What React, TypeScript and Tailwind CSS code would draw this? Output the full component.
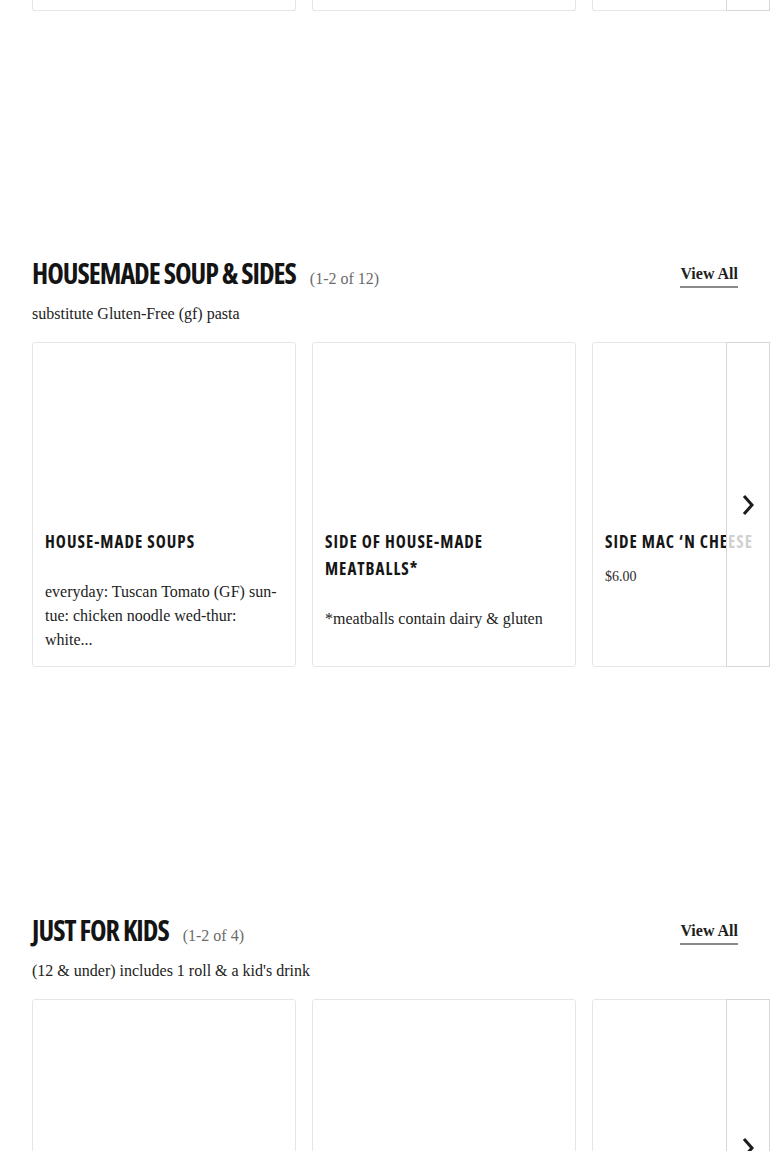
import React from "react";

type Item = { name: string; desc?: string; price?: string };

const soupsAndSides: Item[] = [
  {
    name: "House-made Soups",
    desc: "everyday: Tuscan Tomato (GF) sun-tue: chicken noodle wed-thur: white...",
  },
  { name: "Side of House-made Meatballs*", desc: "*meatballs contain dairy & gluten" },
  { name: "Side Mac \u2018n Cheese", price: "$6.00" },
];

const NextArrow: React.FC<{ clipped?: boolean }> = ({ clipped }) => (
  <div
    className={
      clipped
        ? "absolute right-0 top-0 bottom-0 w-[44px] border border-t-0 border-[#d6d6d6] bg-white/80"
        : "absolute right-0 top-0 bottom-0 w-[44px] border border-[#d6d6d6] bg-white/80 flex items-center justify-center"
    }
  >
    {!clipped && (
      <svg width="12" height="22" viewBox="0 0 12 22" fill="none">
        <path d="M2 2 L10 11 L2 20" stroke="#1c1c1c" strokeWidth="3" />
      </svg>
    )}
  </div>
);

const Card: React.FC<{ item: Item }> = ({ item }) => (
  <div className="w-[264px] shrink-0 border border-[#e6e6e6] rounded-[3px] bg-white flex flex-col">
    <div className="h-[172px]" />
    <div className="px-[12px] pt-[13px] pb-[14px]">
      <h3 className="font-['Open_Sans'] font-stretch-condensed font-bold uppercase text-[17px] leading-[27px] tracking-[1px] text-[#161616]">
        {item.name}
      </h3>
      {item.price && <p className="mt-[12px] text-[14px] leading-[20px] text-[#2a2a2a]">{item.price}</p>}
      {item.desc && <p className="mt-[25px] text-[16px] leading-[24px] text-[#222]">{item.desc}</p>}
    </div>
  </div>
);

const SectionHeader: React.FC<{ title: string; count: string; note: string }> = ({ title, count, note }) => (
  <div className="px-8">
    <div className="flex items-start justify-between">
      <div className="flex items-baseline">
        <h2 className="font-['Open_Sans'] font-stretch-condensed font-bold uppercase text-[28px] leading-[36px] tracking-[-1px] text-[#141414]">
          {title}
        </h2>
        <span className="ml-[14px] text-[16px] text-[#6b6b6b]">{count}</span>
      </div>
      <a href="#" className="mt-[9px] pb-[2px] border-b-2 border-[#8a8a8a] text-[16px] leading-[20px] font-bold text-[#1e1e1e]">
        View All
      </a>
    </div>
    <p className="mt-[11px] text-[16px] leading-[24px] text-[#222]">{note}</p>
  </div>
);

const App: React.FC = () => {
  return (
    <div className="w-full min-h-screen overflow-hidden bg-white font-['Liberation_Serif',serif]">
      {/* end of the previous carousel, scrolled past */}
      <div className="relative">
        <div className="flex gap-4 pl-8">
          {[0, 1, 2].map((i) => (
            <div key={i} className="w-[264px] h-[11px] shrink-0 border border-t-0 border-[#e6e6e6] rounded-b-[3px]" />
          ))}
        </div>
        <NextArrow clipped />
      </div>

      <section className="pt-[244px]">
        <SectionHeader
          title="Housemade Soup & Sides"
          count="(1-2 of 12)"
          note="substitute Gluten-Free (gf) pasta"
        />
        <div className="relative mt-[16px]">
          <div className="flex gap-4 pl-8">
            {soupsAndSides.map((item) => (
              <Card key={item.name} item={item} />
            ))}
          </div>
          <NextArrow />
        </div>
      </section>

      <section className="pt-[245px]">
        <SectionHeader
          title="Just for Kids"
          count="(1-2 of 4)"
          note="(12 & under) includes 1 roll & a kid's drink"
        />
        <div className="relative mt-[16px]">
          <div className="flex gap-4 pl-8">
            {[0, 1, 2].map((i) => (
              <div key={i} className="w-[264px] h-[297px] shrink-0 border border-[#e6e6e6] rounded-[3px]" />
            ))}
          </div>
          <NextArrow />
        </div>
      </section>
    </div>
  );
};

export default App;
